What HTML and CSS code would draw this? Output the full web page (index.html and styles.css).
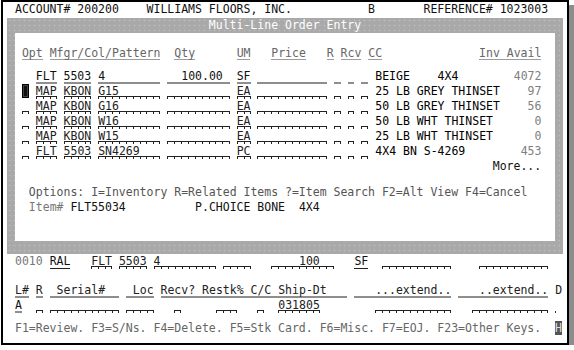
FILE: index.html
```html
<!DOCTYPE html>
<html lang="en">
<head>
    <meta charset="UTF-8">
    <title>Multi-Line Order Entry</title>
    <link rel="stylesheet" href="styles.css">
</head>
<body>
    <div class="frame">
        <div class="ln">ACCOUNT# 200200    WILLIAMS FLOORS, INC.           B       REFERENCE# 1023003</div>

        <!-- popup window -->
        <div class="win">
            <div class="win-title">Multi-Line Order Entry</div>
            <div class="win-body">
                <div class="ln hd"> <span class="u">Opt</span> <span class="u">Mfgr/Col/Pattern</span>  <span class="u">Qty</span>      <span class="u">UM</span>   <span class="u">Price</span>   <span class="u">R</span> <span class="u">Rcv</span> <span class="u">CC</span>              <span class="u">Inv Avail</span></div>
                <div class="rows">
                    <div class="ln">   <span class="g">FLT</span> <span class="g">5503</span> <span class="g">4        </span> <span class="g">  100.00 </span> <span class="g">SF</span> <span class="g">          </span> <span class="g"> </span> <span class="g"> </span> <span class="g"> </span> <span class="ds">BEIGE    4X4</span>        <span class="num">4072</span></div>
                    <div class="ln"> <span class="cur"> </span> <span class="t">MAP</span> <span class="t">KBON</span> <span class="t">G15      </span> <span class="t">         </span> <span class="t">EA</span> <span class="t">          </span> <span class="t"> </span> <span class="t"> </span> <span class="t"> </span> <span class="ds">25 LB GREY THINSET</span>    <span class="num">97</span></div>
                    <div class="ln"> <span class="t"> </span> <span class="t">MAP</span> <span class="t">KBON</span> <span class="t">G16      </span> <span class="t">         </span> <span class="t">EA</span> <span class="t">          </span> <span class="t"> </span> <span class="t"> </span> <span class="t"> </span> <span class="ds">50 LB GREY THINSET</span>    <span class="num">56</span></div>
                    <div class="ln"> <span class="t"> </span> <span class="t">MAP</span> <span class="t">KBON</span> <span class="t">W16      </span> <span class="t">         </span> <span class="t">EA</span> <span class="t">          </span> <span class="t"> </span> <span class="t"> </span> <span class="t"> </span> <span class="ds">50 LB WHT THINSET</span>      <span class="num">0</span></div>
                    <div class="ln"> <span class="t"> </span> <span class="t">MAP</span> <span class="t">KBON</span> <span class="t">W15      </span> <span class="t">         </span> <span class="t">EA</span> <span class="t">          </span> <span class="t"> </span> <span class="t"> </span> <span class="t"> </span> <span class="ds">25 LB WHT THINSET</span>      <span class="num">0</span></div>
                    <div class="ln"> <span class="t"> </span> <span class="t">FLT</span> <span class="t">5503</span> <span class="t">SN4269   </span> <span class="t">         </span> <span class="t">PC</span> <span class="t">          </span> <span class="t"> </span> <span class="t"> </span> <span class="t"> </span> <span class="ds">4X4 BN S-4269</span>        <span class="num">453</span></div>
                    <div class="ln more">More...</div>
                </div>
                <div class="ln opts">  Options: I=Inventory R=Related Items ?=Item Search F2=Alt View F4=Cancel</div>
                <div class="ln">  <span class="dim">Item#</span> FLT55034          P.CHOICE BONE  4X4</div>
            </div>
        </div>

        <div class="ln"><span class="dim">0010</span> <span class="k">RAL</span>   <span class="t">FLT</span> <span class="t">5503</span> <span class="t">4        </span> <span class="t">    </span>   <span class="t">    100  </span>   <span class="k">SF</span>  <span class="t">          </span>    <span class="t">          </span></div>
        <div class="ln detail-hd"><span class="g">L#</span> <span class="g">R</span> <span class="g"> Serial#  </span> <span class="g"> Loc</span> <span class="g">Recv? Restk% C/C Ship-Dt   </span> <span class="g">   ...extend..</span> <span class="g">   ..extend..</span> D</div>
        <div class="ln"><span class="g">A</span>  <span class="t"> </span> <span class="t">          </span> <span class="t">    </span>   <span class="t"> </span>     <span class="t">   </span>   <span class="t"> </span>  <span class="t">031805</span>        <span class="t">           </span>   <span class="t">           </span> <span class="dotf"> </span></div>
        <div class="ln keys"><span class="dim2">F1=Review. F3=S/Ns. F4=Delete. F5=Stk Card. F6=Misc. F7=EOJ. F23=Other Keys.</span>  <span class="ind">H</span></div>
    </div>
</body>
</html>
```

FILE: styles.css
```css
body {
    margin: 0;
    background: #fff;
    font-family: "DejaVu Sans Mono", monospace;
    font-size: 11.5px;
    line-height: 15px;
    color: #111;
}
.frame {
    margin-left: 1px;
    width: 564px;
    height: 341px;
    border: 2px solid #000;
    background: #fff;
    box-shadow: 5px 5px 0 #8c8c8c;
}
.ln {
    white-space: pre;
    height: 15px;
    padding-left: 12px;
}

/* popup window */
.win {
    margin: 1px 0 0 4px;
    width: 556px;
    height: 236px;
    background-color: #a9a9a9;
    background-image: radial-gradient(circle, #bdbdbd 0.7px, transparent 1.1px);
    background-size: 5px 5px;
}
.win-title {
    height: 15px;
    text-align: center;
    color: #fff;
}
.win-body {
    margin: 0 8px;
    height: 208px;
    box-sizing: border-box;
    padding-top: 13px;
    background: #fff;
}
.win-body .ln {
    padding-left: 0;
}
.rows {
    margin-top: 8px;
}
.more {
    padding-left: 69ch !important;
}
.opts {
    margin-top: 11px;
    color: #555;
}
.hd {
    color: #666;
}

/* field styles */
.u {
    background: linear-gradient(#9c9c9c, #9c9c9c) left bottom / 100% 1.5px no-repeat;
}
.g {
    padding-bottom: 1px;
    background: linear-gradient(#8e8e8e, #8e8e8e) left bottom / 100% 2px no-repeat;
}
.k {
    padding-bottom: 1px;
    background: linear-gradient(#222, #222) left bottom / 100% 1px no-repeat;
}
.t {
    color: #222;
    padding-bottom: 1px;
    background:
        linear-gradient(#222, #222) left 0 bottom 2px / 100% 1px no-repeat,
        repeating-linear-gradient(90deg, #222 0 1px, transparent 1px 1ch) left bottom / 100% 3px no-repeat,
        linear-gradient(#222, #222) right bottom / 1px 3px no-repeat;
}
.dotf {
    padding-bottom: 1px;
    background: linear-gradient(#333, #333) left bottom / 1px 2px no-repeat;
}
.cur {
    background: #111;
    box-shadow: inset 0 0 0 1px #000, inset 0 0 0 2px #444;
}
.ds {
    color: #000;
}
.num {
    color: #808080;
}
.dim {
    color: #777;
}
.dim2 {
    color: #666;
}

/* bottom detail area */
.detail-hd {
    margin-top: 14px;
    color: #222;
}
.keys {
    margin-top: 8px;
}
.ind {
    background: #555;
    color: #ddd;
}
```
